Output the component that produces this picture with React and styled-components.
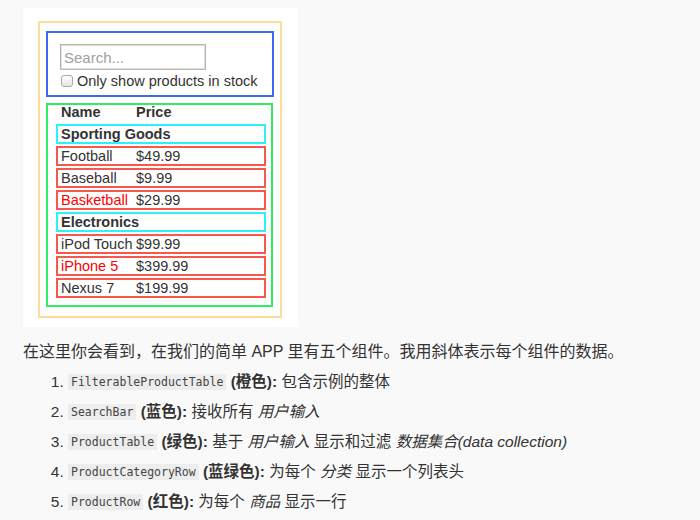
import React from 'react'
import styled, { createGlobalStyle } from 'styled-components'

const products = [
    { category: `Sporting Goods`, price: `$49.99`, stocked: true, name: `Football` },
    { category: `Sporting Goods`, price: `$9.99`, stocked: true, name: `Baseball` },
    { category: `Sporting Goods`, price: `$29.99`, stocked: false, name: `Basketball` },
    { category: `Electronics`, price: `$99.99`, stocked: true, name: `iPod Touch` },
    { category: `Electronics`, price: `$399.99`, stocked: false, name: `iPhone 5` },
    { category: `Electronics`, price: `$199.99`, stocked: true, name: `Nexus 7` }
]

const GlobalStyle = createGlobalStyle`
    html, body {
        margin:0;
        background:#f9f9f9;
    }
    body {
        font-family:"Liberation Sans", "Noto Sans CJK SC", sans-serif;
        color:#333;
    }
`

const App = () => {
    const rows = []
    let lastCategory = null
    products.forEach(product => {
        if (product.category !== lastCategory) {
            rows.push(
                <CategoryRow key={product.category}>{product.category}</CategoryRow>
            )
            lastCategory = product.category
        }
        rows.push(
            <ProductRow key={product.name}>
                <Cell out={!product.stocked}>{product.name}</Cell>
                <Cell>{product.price}</Cell>
            </ProductRow>
        )
    })

    return (
        <Page>
            <GlobalStyle />
            <Shot>
                <Frame color={`#fddc9c`}>
                    <SearchBox>
                        <SearchInput placeholder={`Search...`} readOnly />
                        <StockLabel>
                            <Check type={`checkbox`} />
                            Only show products in stock
                        </StockLabel>
                    </SearchBox>
                    <TableBox>
                        <HeadRow>
                            <span>Name</span>
                            <span>Price</span>
                        </HeadRow>
                        {rows}
                    </TableBox>
                </Frame>
            </Shot>
            <Intro>在这里你会看到，在我们的简单 APP 里有五个组件。我用斜体表示每个组件的数据。</Intro>
            <List>
                <Item><Code>FilterableProductTable</Code> <b>(橙色):</b> 包含示例的整体</Item>
                <Item><Code>SearchBar</Code> <b>(蓝色):</b> 接收所有 <i>用户输入</i></Item>
                <Item><Code>ProductTable</Code> <b>(绿色):</b> 基于 <i>用户输入</i> 显示和过滤 <i>数据集合(data collection)</i></Item>
                <Item><Code>ProductCategoryRow</Code> <b>(蓝绿色):</b> 为每个 <i>分类</i> 显示一个列表头</Item>
                <Item><Code>ProductRow</Code> <b>(红色):</b> 为每个 <i>商品</i> 显示一行</Item>
            </List>
        </Page>
    )
}

export default App

// Styled Components
const Page = styled.div`
    padding:8px 0 0 23px;
    font-size:16px;
`
const Shot = styled.div`
    width:275px;
    height:319px;
    box-sizing:border-box;
    background:#fff;
    padding:13px 0 0 15px;
`
const Frame = styled.div`
    width:244px;
    height:297px;
    box-sizing:border-box;
    border:2px solid ${props => props.color};
    padding:8px 6px 0 6px;
    font-size:14px;
    color:#333;
`
const SearchBox = styled.div`
    width:228px;
    height:66px;
    box-sizing:border-box;
    border:2px solid #3f68ee;
    padding:11px 12px 0;
`
const SearchInput = styled.input`
    display:block;
    width:146px;
    height:26px;
    box-sizing:border-box;
    margin:0;
    border:1px solid #b8b5b0;
    box-shadow:inset 0 0 0 1px #e0deda;
    padding:0 3px;
    font-family:"Liberation Sans", sans-serif;
    font-size:15px;
    color:#333;
    outline:none;
    &::placeholder {
        color:#a0a0a0;
    }
`
const StockLabel = styled.label`
    display:flex;
    align-items:center;
    margin-top:2px;
    height:18px;
    line-height:18px;
    font-size:14.5px;
    color:#333;
`
const Check = styled.input`
    appearance:none;
    width:12px;
    height:12px;
    margin:0 4px 0 1px;
    border:1px solid #a8a8a8;
    border-radius:3px;
    background:linear-gradient(#fdfdfd, #e6e6e6);
`
const TableBox = styled.div`
    width:227px;
    height:204px;
    box-sizing:border-box;
    margin-top:6px;
    border:2px solid #33ec66;
    padding:0 0 0 8px;
`
const HeadRow = styled.div`
    display:grid;
    grid-template-columns:75px 1fr;
    padding-left:5px;
    height:14px;
    line-height:14px;
    margin-bottom:5px;
    font-weight:bold;
    font-size:14.5px;
`
const RowBox = styled.div`
    width:210px;
    height:20px;
    box-sizing:border-box;
    padding-left:3px;
    line-height:16px;
    margin-bottom:2px;
    font-size:14.5px;
`
const CategoryRow = styled(RowBox)`
    border:2px solid #2ef0fb;
    font-weight:bold;
`
const ProductRow = styled(RowBox)`
    display:grid;
    grid-template-columns:75px 1fr;
    border:2px solid #f7584c;
`
const Cell = styled.span`
    white-space:nowrap;
    color:${props => props.out ? `#ff0000` : `#333`};
`
const Intro = styled.p`
    margin:10px 0 0;
    line-height:30px;
`
const List = styled.ol`
    margin:0;
    padding-left:45px;
    font-size:15.5px;
`
const Item = styled.li`
    height:30px;
    line-height:30px;
    white-space:nowrap;
    b {
        font-weight:bold;
    }
`
const Code = styled.code`
    display:inline-block;
    line-height:16px;
    vertical-align:1px;
    font-family:"DejaVu Sans Mono", monospace;
    font-size:11.5px;
    color:#444;
    background:#ededed;
    padding:0 3px;
`
